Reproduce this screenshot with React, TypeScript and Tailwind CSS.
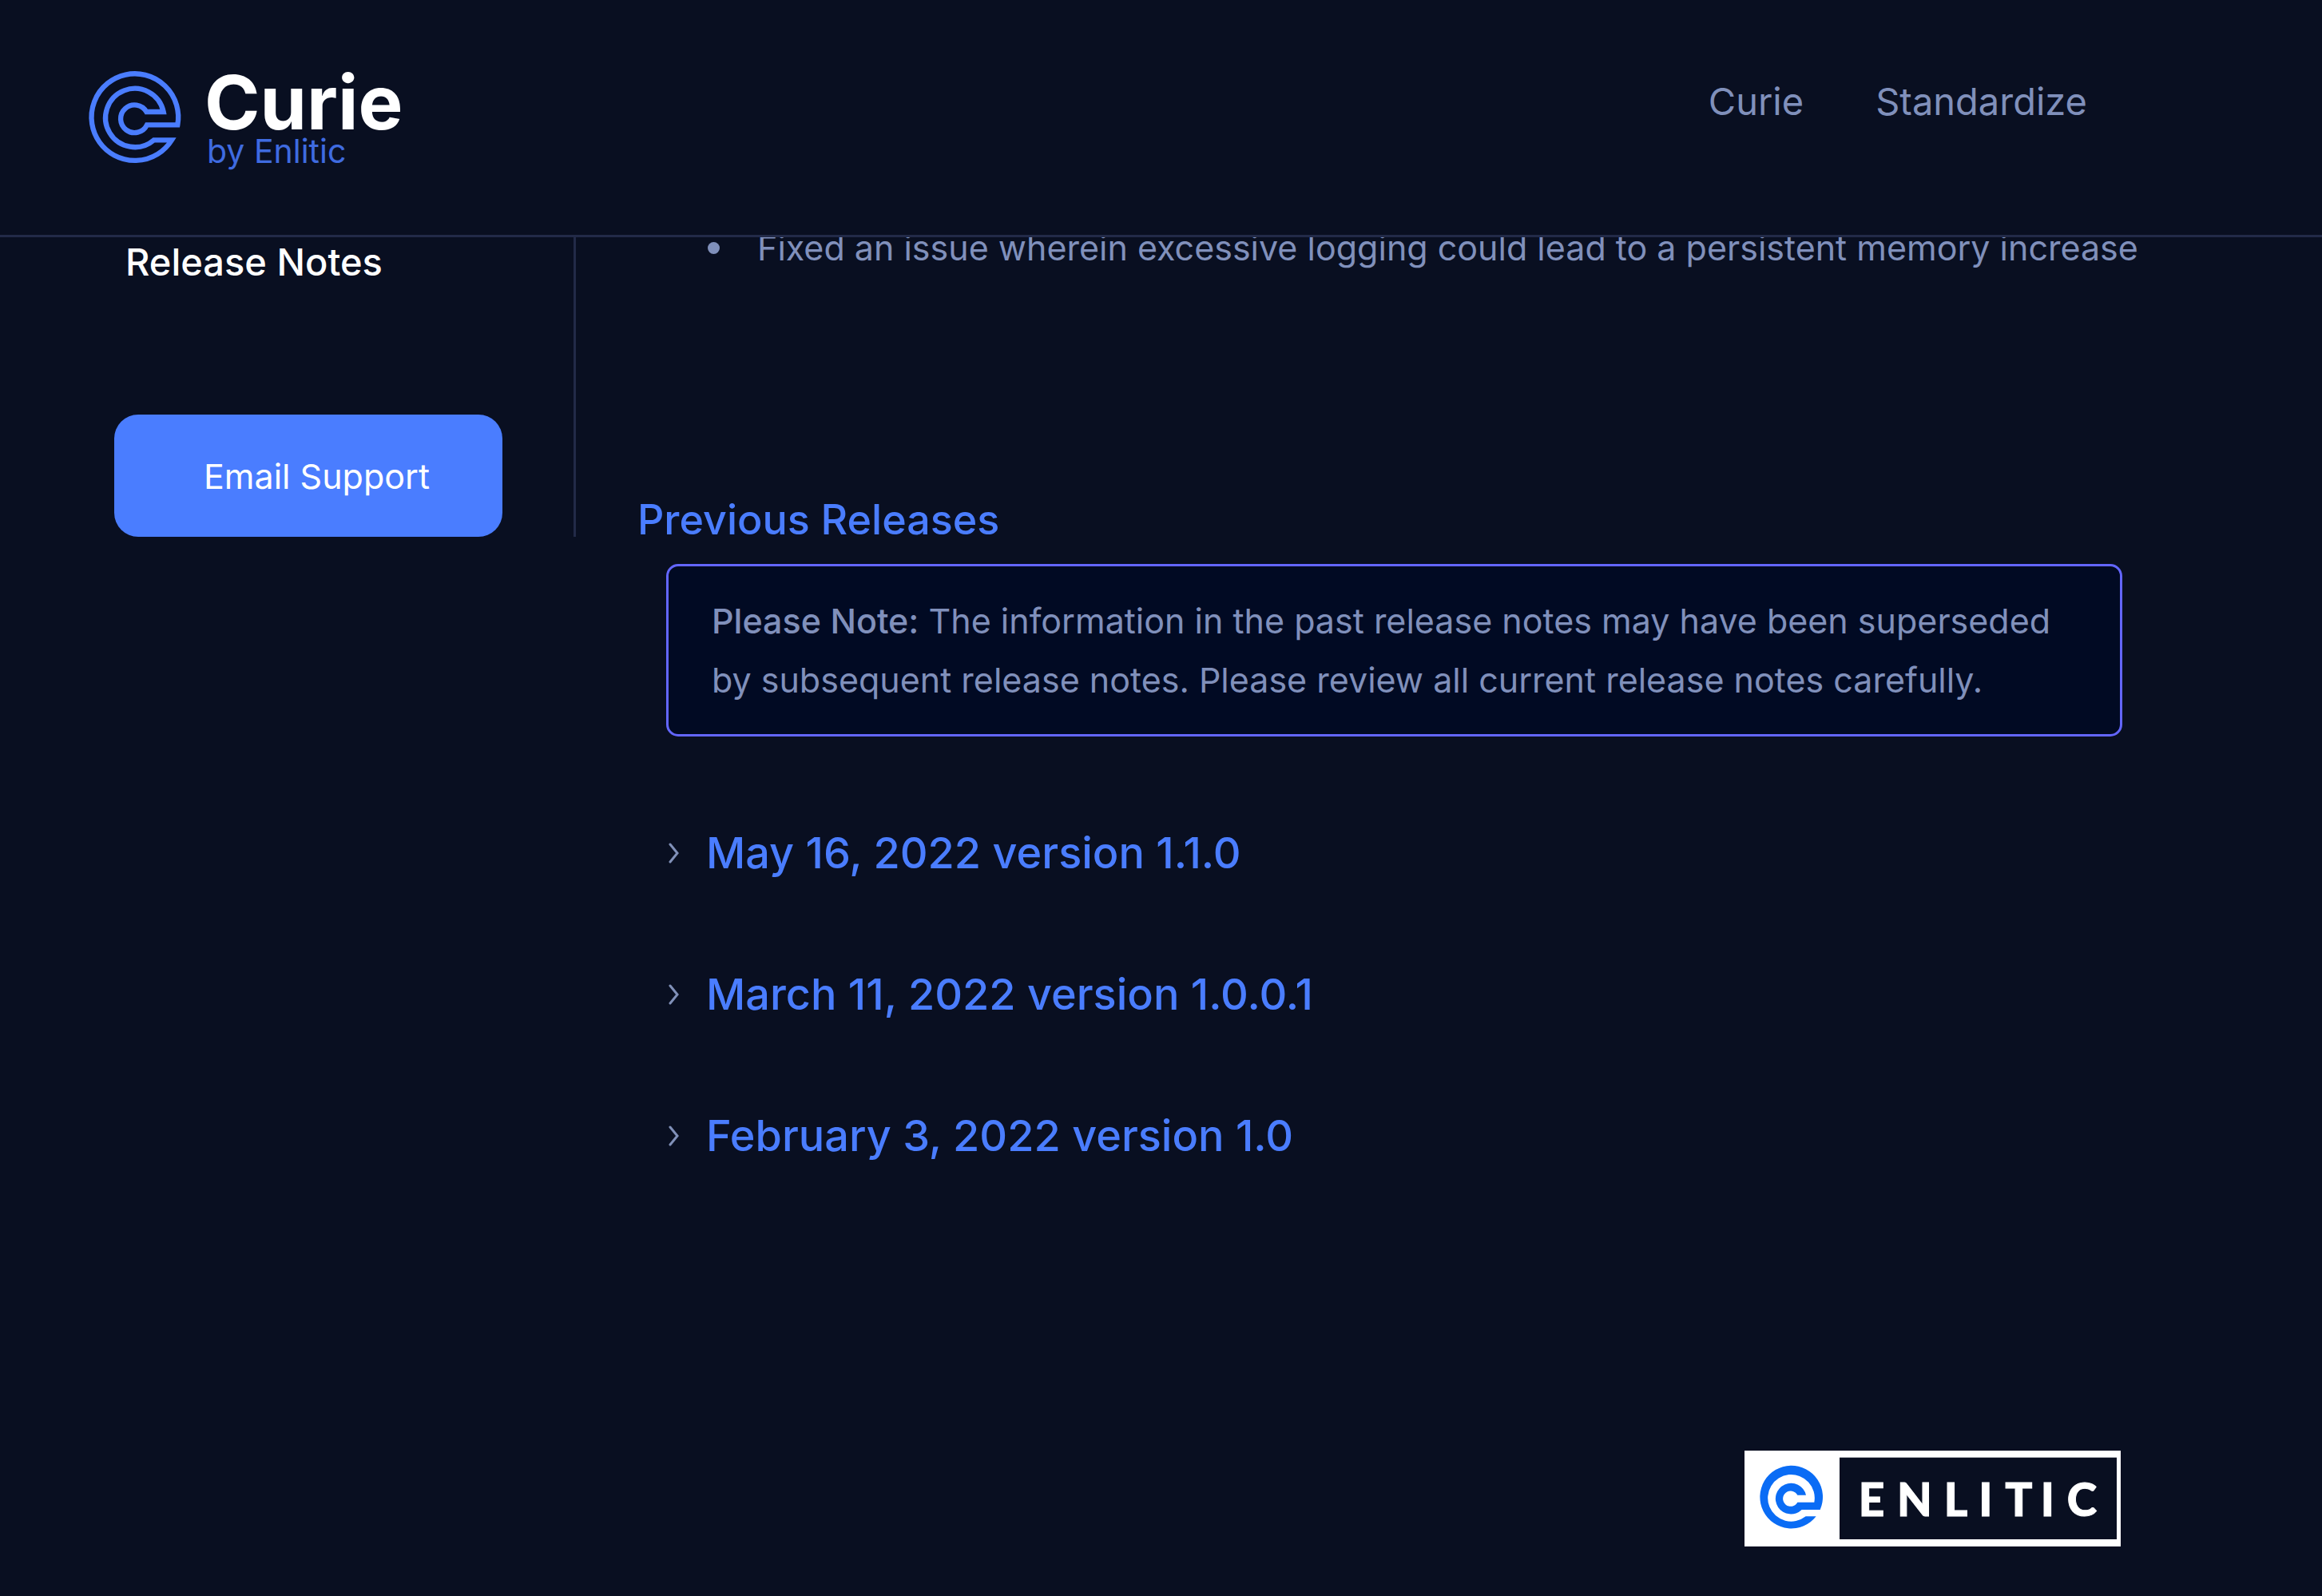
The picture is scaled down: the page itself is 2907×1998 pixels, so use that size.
const releases = [
  "May 16, 2022 version 1.1.0",
  "March 11, 2022 version 1.0.0.1",
  "February 3, 2022 version 1.0",
];

function CurieLogo() {
  return (
    <a href="#" aria-label="Curie by Enlitic" className="block shrink-0">
      <svg viewBox="0 -24 396 154" className="block h-[154px] w-[396px] overflow-visible">
        <g transform="translate(-1 1) scale(0.3333)">
          <path
            d="M334 199A163 163 0 1 0 312 256L245 256A110 110 0 1 1 281 150L217 150A52 52 0 1 0 219 199Z"
            fill="none"
            stroke="#4a7dff"
            strokeWidth="19"
          />
        </g>
        <text x="144" y="73" fill="#ffffff" fontFamily="Inter, sans-serif" fontSize="94" fontWeight="700">
          Curie
        </text>
        <text x="147" y="115" fill="#3f6be0" fontFamily="Inter, sans-serif" fontSize="41" fontWeight="400">
          by Enlitic
        </text>
      </svg>
    </a>
  );
}

function EnliticLogo() {
  return (
    <svg viewBox="0 0 1413 360" role="img" aria-label="Enlitic" className="block h-[120px] w-[471px]">
      <rect width="1413" height="360" fill="#ffffff" />
      <rect x="357" y="26" width="1041" height="307" fill="#090f21" />
      <path
        transform="translate(-73 -46)"
        d="M357 268A118 118 0 1 0 342 293L303 293A88 88 0 1 1 335 240L272 240A29 29 0 1 1 272 213L304 213A58 58 0 1 0 288 268Z"
        fill="#0a6cf5"
      />
      <text
        x="428 573 749 880 979 1112 1211"
        y="245"
        fill="#ffffff"
        stroke="#ffffff"
        strokeWidth="3"
        fontFamily="Lato, sans-serif"
        fontSize="170"
        fontWeight="900"
      >
        ENLITIC
      </text>
    </svg>
  );
}

function Chevron() {
  return (
    <svg viewBox="0 0 14 26" className="h-[26px] w-[14px] shrink-0" aria-hidden="true">
      <path d="M2 2L11 13L2 24" fill="none" stroke="#8090b8" strokeWidth="3" strokeLinecap="round" />
    </svg>
  );
}

export default function App() {
  return (
    <div className="min-h-screen bg-[#090f21] font-['Inter',sans-serif] text-[43px] leading-[74px] text-[#8090bb]">
      <header className="relative z-10 flex h-[297px] items-start justify-between border-b-[3px] border-[#222a48] bg-[#090f21] pt-[65px] pr-[294px] pl-[112px]">
        <CurieLogo />
        <nav className="flex gap-[90px] pt-[30px] text-[47px] leading-[64px]">
          <a href="#">Curie</a>
          <a href="#">Standardize</a>
        </nav>
      </header>

      <div className="flex items-start">
        <aside className="w-[721px] shrink-0 border-r-[3px] border-[#222a48] pl-[143px]">
          <a href="#" className="block pl-[14px] text-[47px] leading-[62px] font-medium text-white">
            Release Notes
          </a>
          <button
            type="button"
            className="mt-[160px] block h-[153px] w-[486px] rounded-[30px] bg-[#4a7dff] pl-[112px] text-left text-white"
          >
            Email Support
          </button>
        </aside>

        <main className="-mt-[24px] min-w-0 flex-1 pr-[250px] pb-[62px] pl-[77px]">
          <ul className="pl-[88px]">
            <li className="flex items-center gap-[47px] whitespace-nowrap">
              <span className="size-[15px] shrink-0 rounded-full bg-[#8090bb]" />
              Fixed an issue wherein excessive logging could lead to a persistent memory increase
            </li>
          </ul>
          <h2 className="mt-[268px] text-[52px] leading-[72px] font-medium text-[#4a7dff]">Previous Releases</h2>
          <p className="mt-[19px] ml-[36px] rounded-[15px] border-[3px] border-[#6366ff] bg-[#010a23] px-[54px] py-[31px]">
            <strong className="font-medium">Please Note:</strong> The information in the past release notes may have
            been superseded by subsequent release notes. Please review all current release notes carefully.
          </p>
          <div className="mt-[106px] ml-[39px] flex flex-col items-start gap-[97px]">
            {releases.map((release) => (
              <button
                key={release}
                type="button"
                className="flex items-center gap-[33px] text-[54px] leading-[80px] font-medium text-[#4a7dff]"
              >
                <Chevron />
                {release}
              </button>
            ))}
          </div>
          <footer className="mt-[354px] flex justify-end pr-[2px]">
            <EnliticLogo />
          </footer>
        </main>
      </div>
    </div>
  );
}
